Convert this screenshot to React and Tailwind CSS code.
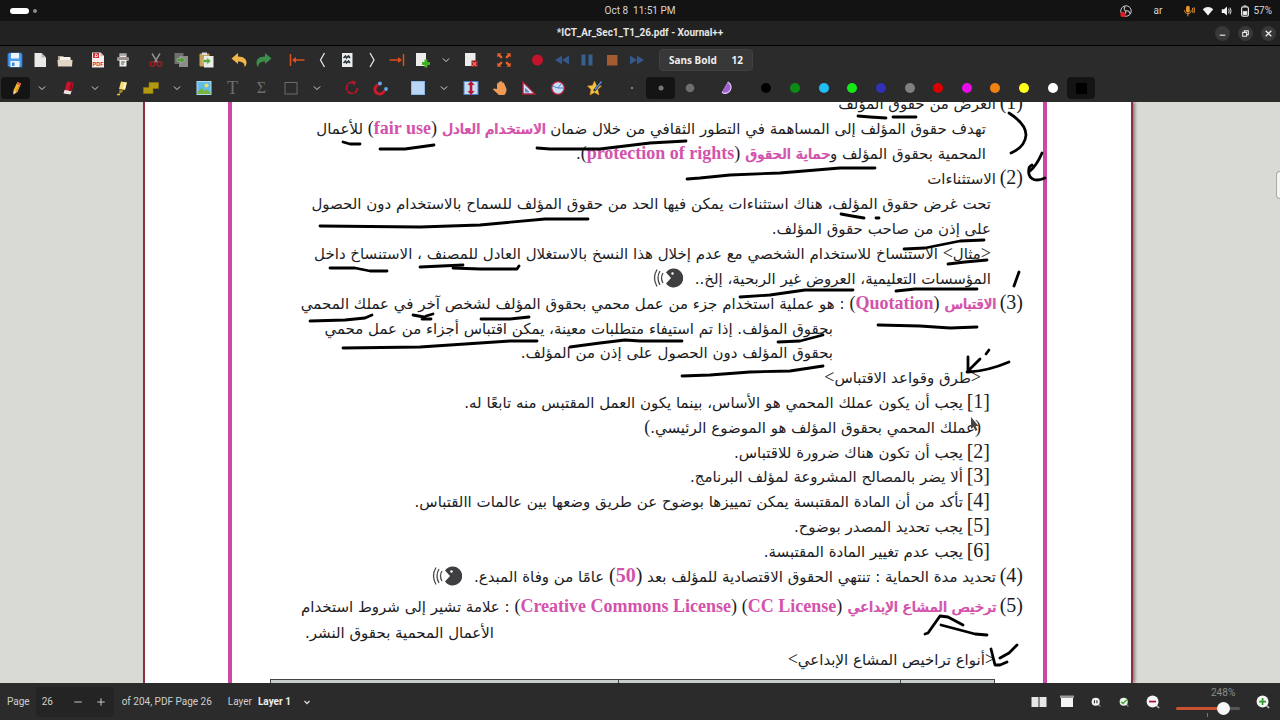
import React, { useState } from 'react';

const Svg = ({ size = 'w-4 h-4', children }) => (
    <svg viewBox="0 0 16 16" className={`${size} shrink-0`} fill="none">{children}</svg>
);

const Chevron = () => (
    <Svg size="w-[10px] h-[10px]">
        <path d="M3 5.5l5 5 5-5" stroke="#d8d8d8" strokeWidth="1.6" />
    </Svg>
);

const ICONS = {
    save: (
        <Svg>
            <path d="M1 2.500Q1 1 2.500 1H13.500Q15 1 15 2.500V15H2.500L1 13.500z" fill="#4a9df0" stroke="#2c6fbf" />
            <rect x="4" y="1" width="8" height="5.500" fill="#eef4fb" />
            <rect x="3.500" y="9" width="9" height="6" fill="#eef4fb" />
            <rect x="5" y="10.500" width="2.500" height="3.500" fill="#3a86da" />
        </Svg>
    ),
    newDoc: (
        <Svg>
            <path d="M2.500 1h7l4.500 4.500V15H2.500z" fill="#e9e9e7" />
            <path d="M9.500 1v4.500H14z" fill="#b9b9b6" />
        </Svg>
    ),
    open: (
        <Svg>
            <path d="M1 4h5l1.500 1.500H14V9H1z" fill="#b9a994" />
            <path d="M3 5h10v4H3z" fill="#f3f1ee" />
            <path d="M.5 8h15l-.5 6.500H1z" fill="#e2d5c4" />
        </Svg>
    ),
    pdf: (
        <Svg>
            <path d="M2 .5h8.500L14 4v11.500H2z" fill="#f5eeee" />
            <path d="M3 1h6v5H3z" fill="#d8282c" />
            <path d="M5 5l1-3.500L8 4z" stroke="#fff" strokeWidth=".8" />
            <path d="M10.500.5V4H14z" fill="#c9b8b8" />
            <text x="8" y="13.500" fontSize="5.500" fontWeight="bold" textAnchor="middle" fill="#d8282c" fontFamily="Liberation Sans, sans-serif">PDF</text>
        </Svg>
    ),
    print: (
        <Svg>
            <path d="M4.500 1.500h7V5h-7z" fill="#e8e6e4" />
            <path d="M5 3h6" stroke="#777" />
            <rect x="2" y="5" width="12" height="4" rx="1" fill="#9d918d" />
            <path d="M4.500 8h7v6.500h-7z" fill="#efefed" />
            <path d="M6 10h4M6 12h3" stroke="#555" />
        </Svg>
    ),
    cut: (
        <Svg>
            <path d="M4 1.500l5.500 9M12 1.500l-5.500 9" stroke="#8e8e8e" strokeWidth="1.500" />
            <circle cx="4.500" cy="12" r="2.300" stroke="#9b2025" strokeWidth="1.500" />
            <circle cx="11.500" cy="12" r="2.300" stroke="#9b2025" strokeWidth="1.500" />
        </Svg>
    ),
    copy: (
        <Svg>
            <rect x="1.500" y="1" width="9" height="11" fill="#6f6f6d" />
            <rect x="6" y="4" width="9" height="11" fill="#8b8b88" />
            <path d="M4 6.500h4V4.500l4 3.500-4 3.500V9.500H4z" fill="#4d9a35" stroke="#a5b89e" strokeWidth=".6" />
        </Svg>
    ),
    paste: (
        <Svg>
            <rect x="1.500" y="1.500" width="10" height="13" rx="1" fill="#c6a15a" />
            <rect x="4" y=".5" width="5" height="2.500" fill="#ddd" />
            <rect x="6" y="4" width="9.500" height="11.500" fill="#ecece9" />
            <path d="M5 7.500h4V5.500l4 3.500-4 3.500v-2H5z" fill="#5aab3b" stroke="#d4e8cc" strokeWidth=".6" />
        </Svg>
    ),
    undo: (
        <Svg>
            <path d="M.5 6.500L7 1v3.500c6 0 8.500 3 8.500 6 0 2-.8 3.500-2 4.500.3-3-1-5.500-6.500-5.500V12z" fill="#f2b54a" />
        </Svg>
    ),
    redo: (
        <Svg>
            <path d="M15.500 6.500L9 1v3.500c-6 0-8.500 3-8.500 6 0 2 .8 3.500 2 4.500-.3-3 1-5.500 6.500-5.500V12z" fill="#3c8f4a" />
        </Svg>
    ),
    first: (
        <Svg>
            <path d="M1.500 2v12M4 8h11.500" stroke="#dd4f1e" strokeWidth="1.500" />
            <path d="M3 8l4-3v6z" fill="#dd4f1e" />
        </Svg>
    ),
    prev: <Svg><path d="M10.500 1L6.500 8l4 7" stroke="#e4e4e4" strokeWidth="1.300" /></Svg>,
    goto: (
        <Svg>
            <rect x="3" y="1" width="10.500" height="14" fill="#eceeee" />
            <path d="M4.500 6l2-2 1 2 2-2 1.500 2M4.500 11l2-2 1 2 2-2 1.500 2" stroke="#263238" strokeWidth="1.600" />
        </Svg>
    ),
    next: <Svg><path d="M6 1L10 8l-4 7" stroke="#e4e4e4" strokeWidth="1.300" /></Svg>,
    last: (
        <Svg>
            <path d="M14.500 2v12M.5 8H12" stroke="#dd4f1e" strokeWidth="1.500" />
            <path d="M13 8L9 5v6z" fill="#dd4f1e" />
        </Svg>
    ),
    addPage: (
        <Svg>
            <path d="M2 1h10v13H2z" fill="#ecece9" />
            <path d="M12 7.500v8M8 11.500h8" stroke="#3fb31f" strokeWidth="3" />
        </Svg>
    ),
    delPage: (
        <Svg>
            <path d="M2 1h10.500v13H2z" fill="#ecece9" />
            <rect x="8.500" y="8.500" width="6.500" height="6.500" fill="#8e1a22" />
            <path d="M9.500 10l4 4M13.500 10l-4 4" stroke="#ff6a6a" strokeWidth="1.400" />
        </Svg>
    ),
    full: (
        <Svg>
            <path d="M1 6V1h5L4.500 2.500 7 5 5 7 2.500 4.500zM15 6V1h-5l1.500 1.500L9 5l2 2 2.500-2.500zM1 10v5h5l-1.500-1.500L7 11 5 9l-2.500 2.500zM15 10v5h-5l1.500-1.500L9 11l2-2 2.500 2.500z" fill="#e8602c" stroke="#2b2b2b" strokeWidth=".6" />
        </Svg>
    ),
    record: <Svg><circle cx="8.500" cy="8" r="5.500" fill="#c4142c" /></Svg>,
    rewind: <Svg><path d="M8 3.500v9L1 8zM15 3.500v9L8 8z" fill="#35578a" /></Svg>,
    pause: <Svg><path d="M2.500 2.500h4v11h-4zM9.500 2.500h4v11h-4z" fill="#35608f" /></Svg>,
    stop: <Svg><rect x="3" y="3" width="10.500" height="10.500" fill="#a35c30" /></Svg>,
    forward: <Svg><path d="M1 3.500v9L8 8zM8 3.500v9L15 8z" fill="#35578a" /></Svg>,
    pencil: (
        <Svg>
            <path d="M9.500 2l3.500 1.500-3.500 8.500-4 2.500.3-5z" fill="#f3b62e" />
            <path d="M9.500 2l3.500 1.500-.8 2L8.700 4z" fill="#e2574c" />
            <path d="M5.700 10.500l2.500 1.600-2.800 2.400z" fill="#f4dcae" />
            <path d="M11.500 5L8 12" stroke="#d98516" />
        </Svg>
    ),
    eraser: (
        <Svg>
            <path d="M6 1.500l7 1-2.500 9.500-7-1z" fill="#c9142c" />
            <path d="M3.500 10l7 1-1 3.500-7-1z" fill="#ece3e3" />
            <path d="M11 2.500L9 11" stroke="#8e0b1e" strokeWidth="2" />
        </Svg>
    ),
    marker: (
        <Svg>
            <path d="M7 1.500l6 1-2 7.500-6-1z" fill="#f6dc78" />
            <path d="M11.500 2.500L10 9" stroke="#fff3c4" strokeWidth="2" />
            <path d="M5.500 9.500l4 1-2 2.500-2.500.5z" fill="#a88222" />
            <path d="M3 14.500h3" stroke="#e7c53c" strokeWidth="1.500" />
        </Svg>
    ),
    select: <Svg><path d="M6 2.500h9.500v6H10v5H.5v-6H6z" fill="#b3990f" stroke="#8d780c" strokeWidth=".6" /></Svg>,
    image: (
        <Svg>
            <rect x="1" y="1.500" width="14" height="13" fill="#63bde8" stroke="#a9dcf4" />
            <circle cx="10.500" cy="5.500" r="2" fill="#f7dc4f" />
            <path d="M1.500 12l4-4 3 3 2-1.500 4 3V14h-13z" fill="#79b43c" />
        </Svg>
    ),
    shape: <Svg><rect x="2" y="2.500" width="12" height="11.500" stroke="#6d6d6d" /></Svg>,
    rotate: (
        <Svg>
            <path d="M10 2.800A5.500 5.500 0 1 0 13.500 8" stroke="#b5182a" strokeWidth="1.800" strokeDasharray="6 1" />
            <path d="M8 .5l4.500 1.500L9.500 6z" fill="#b5182a" />
        </Svg>
    ),
    magnet: (
        <Svg>
            <path d="M5.500 4.500C1.500 6 .5 11.500 4.500 13.500c3.500 1.500 6-.5 7-3" stroke="#cf1a2c" strokeWidth="2.800" />
            <circle cx="7" cy="3.500" r="1.900" fill="#66a9ef" />
            <circle cx="13" cy="9" r="1.900" fill="#66a9ef" />
        </Svg>
    ),
    rectSelect: <Svg><rect x="1.500" y="1.500" width="13" height="13" fill="#b9d7f4" stroke="#8db8e4" /></Svg>,
    vertical: (
        <Svg>
            <rect x="1" y="1.500" width="14" height="13" fill="#c4dbf5" stroke="#4f84c4" />
            <path d="M8 1l3.500 4H9.300v6h2.200L8 15l-3.500-4h2.200V5H4.500z" fill="#b7142e" />
        </Svg>
    ),
    hand: (
        <Svg>
            <path d="M5 9V3.500q.8-1.200 1.600 0V2q.9-1.200 1.800 0v-.5q.9-1.200 1.800 0V3q.9-1 1.800 0L14.500 9q.5 3-2 6H7L1 9.500q.5-1.500 2-.8z" fill="#f19a54" />
        </Svg>
    ),
    triangle: (
        <Svg>
            <path d="M2 2V14H14z" fill="#cfe0f4" stroke="#b3203c" strokeWidth="1.300" />
            <path d="M4.500 8.500V12H8z" fill="#7f8fa8" stroke="#5b8ed1" />
        </Svg>
    ),
    compass: (
        <Svg>
            <circle cx="8" cy="8" r="6.300" fill="#c8def6" stroke="#b3203c" strokeWidth="1.300" />
            <path d="M2.500 6L8 8h6M8 8l3-4" stroke="#4a86c8" />
        </Svg>
    ),
    star: (
        <Svg>
            <path d="M7.500 1l2 4.500 5 .5-3.800 3.500 1.300 5.500-4.500-2.500L3 15l1-5.500L.5 6l5-.5z" fill="#f5c542" stroke="#d08a1c" strokeWidth=".6" />
            <path d="M14.500 1.500L7 11" stroke="#24364f" strokeWidth="2.600" />
            <path d="M14.500 1.500L8 9.500" stroke="#5d8fd6" strokeWidth="1.200" />
        </Svg>
    ),
    dotS: <Svg><circle cx="8" cy="8" r="1.300" fill="#777" /></Svg>,
    dotM: <Svg><circle cx="8" cy="8" r="2.500" fill="#777" /></Svg>,
    dotL: <Svg><circle cx="8" cy="8" r="4.300" fill="#6e6e6e" /></Svg>,
    fill: (
        <Svg>
            <path d="M9 2A6 6 0 1 1 3 12.500z" fill="#a25fd6" />
            <path d="M9 2A6 6 0 1 1 3 12.500" stroke="#e3c8f5" strokeWidth="1.200" />
            <path d="M9 2L3 12.500" stroke="#c79be6" strokeDasharray="1.500 1" />
        </Svg>
    ),
};

const fileTools = [
    ['save', 'newDoc', 'open'],
    ['pdf', 'print'],
    ['cut', 'copy', 'paste'],
    ['undo', 'redo'],
    ['first', 'prev', 'goto', 'next', 'last', 'addPage', 'chevron', 'delPage'],
    ['full'],
    ['record', 'rewind', 'pause', 'stop', 'forward'],
];

const penTools = [
    ['pencil', 'chevron', 'eraser', 'chevron', 'marker', 'select', 'chevron', 'image', 'text', 'latex', 'shape', 'chevron'],
    ['rotate', 'magnet'],
    ['rectSelect', 'chevron', 'vertical', 'hand', 'triangle', 'compass'],
    ['star'],
    ['dotS', 'dotM', 'dotL'],
    ['fill'],
];

const colors = ['#000000', '#0e8a16', '#22bdf2', '#17e817', '#3330b8', '#808080', '#dc0000', '#e80ee8', '#f08316', '#ffff1a', '#ffffff'];

function ToolButton({ name, wide, active, onClick }) {
    const isChevron = name === 'chevron';
    let width = wide ? 'w-[29px]' : 'w-[25px]';
    if (isChevron) width = 'w-[24px]';
    return (
        <button
            aria-label={name}
            onClick={onClick}
            className={`${width} h-[22px] flex items-center justify-center rounded ${active ? 'bg-[#141414]' : ''}`}
        >
            {isChevron && <Chevron />}
            {name === 'text' && <span className="font-['Liberation_Serif',serif] text-[18px] leading-none text-[#6d6d6d]">T</span>}
            {name === 'latex' && <span className="font-['Liberation_Serif',serif] text-[16px] leading-none text-[#6d6d6d]">Σ</span>}
            {ICONS[name]}
        </button>
    );
}

// Latin text inside the Arabic paragraphs
const En = ({ size = 'text-[18px]', children }) => (
    <bdi className={`font-['Liberation_Serif',serif] ${size} leading-none`}>{children}</bdi>
);
const Pink = ({ children }) => <b className="text-[#d352ab]">{children}</b>;
// the bold Arabic face is far too wide, so thicken the regular one
const PinkAr = ({ children }) => (
    <strong className="font-normal text-[#d352ab] [text-shadow:1px_0_#d352ab]">{children}</strong>
);
const Mark = ({ children }) => <span className="font-['Liberation_Serif',serif] text-[18px] leading-none">{children}</span>;
const Num = ({ children }) => <span className="inline-block w-[27px] leading-none"><En size="text-[20px]">{children}</En></span>;

const Line = ({ className = 'pr-[20px]', children }) => (
    <p className={`${className} h-[25px] leading-[25px] whitespace-nowrap`}>{children}</p>
);

const Speaking = () => (
    <svg viewBox="0 0 30 20" className="inline-block w-[30px] h-[20px] mr-3 mb-1 align-middle" fill="none">
        <path d="M13 4.500A9.500 9.500 0 1 1 13 15.500L18 10z" fill="#3f3f42" />
        <circle cx="19.500" cy="5.500" r="1.200" fill="#fff" />
        <path d="M10 5Q7 10 10 15M7 3Q3 10 7 17M4 1.500Q-1 10 4 18.500" stroke="#4a4a4d" strokeWidth="1.300" />
    </svg>
);

const strokes = [
    'M858 116L870 117L886 118',
    'M893 117L916 117',
    'M1009 113Q1026 124 1026 135Q1025 147 1011 153',
    'M1042 153Q1037 165 1030 171Q1027 168 1032 165M1029 168C1027 178 1034 183 1045 178',
    'M687 179L700 178L730 175L780 173L840 168L875 168',
    'M841 214L852 216L864 218',
    'M876 218L879 218',
    'M904 249L925 248L960 241L984 240',
    'M948 264L965 262L987 260',
    'M1014 286L1019 272',
    'M896 291L915 289L977 289',
    'M740 297L770 295L805 290L853 290',
    'M343 142L350 144L360 144',
    'M380 149L405 149L434 145',
    'M537 148L550 149L600 149L650 143L686 141',
    'M320 226L420 227L480 225L545 219L588 219',
    'M330 268L355 268L370 271L387 271',
    'M420 267L463 265',
    'M453 268L480 269L517 269L519 266',
    'M310 321L345 320L365 318L372 315',
    'M413 315L424 317L422 319L431 319M426 316L433 314',
    'M481 319L510 319L529 317',
    'M343 348L420 347L480 343L510 341L537 341',
    'M570 347L600 343L625 340L640 341L682 341',
    'M682 376L710 375L750 372L790 371L823 366',
    'M778 342L800 341L823 335',
    'M878 325L920 326L950 328L977 327',
    'M968 357L968 372Q988 371 1009 362M967 372L980 359M986 354L989 350',
    'M925 634L928 633L940 616L948 617L963 625',
    'M941 625L960 630L975 634L987 635',
    'M991 649L995 665L1000 665L1007 662M1000 658L1009 653L1017 645',
];

function TopBar() {
    return (
        <header className="h-[21px] shrink-0 bg-[#131313] text-[#d6d6d6] grid grid-cols-3 items-center px-[10px]">
            <div className="flex items-center gap-1">
                <span className="w-[19px] h-[6px] rounded-full bg-white"></span>
                <span className="w-1 h-1 rounded-full bg-[#8a8a8a]"></span>
            </div>
            <time className="text-center whitespace-pre">Oct 8  11:51 PM</time>
            <div className="flex items-center justify-end -mr-[2px]">
                <Svg size="w-3 h-3">
                    <circle cx="8" cy="8" r="7" stroke="#c9c9c9" strokeWidth="1.300" />
                    <path d="M8 8c-3-1-3-4-1-6M8 8c3-1 5 1 5.500 4M8 8c0 3-2 5-5 4" stroke="#c9c9c9" strokeWidth="1.500" />
                    <circle cx="4" cy="12.500" r="3.500" fill="#e01b24" />
                </Svg>
                <span className="ml-[22px] mr-[21px]">ar</span>
                <Svg size="w-3 h-3">
                    <rect x="4" y="1" width="5" height="9" rx="2.500" fill="#e8962e" />
                    <path d="M2 7c0 6 9 6 9 0M6.500 11.500V15M12.500 4q1.500 3 0 6M14.500 3q2 4 0 8" stroke="#e8962e" strokeWidth="1.300" />
                </Svg>
                <span className="w-[7px]"></span>
                <Svg size="w-3 h-3"><path d="M1 5.500Q8-.5 15 5.500L8 14z" fill="#f2f2f2" /></Svg>
                <span className="w-[7px]"></span>
                <Svg size="w-3 h-3">
                    <path d="M1 5.500h3L8 2v12l-4-3.500H1z" fill="#f2f2f2" />
                    <path d="M10 5q2 3 0 6M12 3.500q3 4.500 0 9" stroke="#f2f2f2" strokeWidth="1.200" />
                </Svg>
                <span className="w-[6px]"></span>
                <Svg size="w-3 h-3">
                    <rect x="3.500" y="2.500" width="9" height="12.500" rx="2" stroke="#f2f2f2" strokeWidth="1.500" />
                    <path d="M6 1h4M5.500 8.500h5v4.500h-5z" stroke="#f2f2f2" fill="#f2f2f2" />
                </Svg>
                <span className="ml-[2px]">57%</span>
            </div>
        </header>
    );
}

function TitleBar() {
    const btn = 'w-[15px] h-[15px] rounded-full bg-[#383838] flex items-center justify-center';
    return (
        <div className="h-[25px] shrink-0 bg-[#222222] border-b border-black grid grid-cols-[1fr_auto_1fr] items-center px-1">
            <span></span>
            <h1 className="font-bold text-[#e6e6e6]">*ICT_Ar_Sec1_T1_26.pdf - Xournal++</h1>
            <div className="flex justify-end gap-2">
                <button aria-label="Minimize" className={btn}>
                    <Svg size="w-[9px] h-[9px]"><path d="M3 11h10" stroke="#eee" strokeWidth="2" /></Svg>
                </button>
                <button aria-label="Restore" className={btn}>
                    <Svg size="w-[9px] h-[9px]"><path d="M3 6h7v7H3zM6 6V3h7v7h-3" stroke="#eee" strokeWidth="1.800" /></Svg>
                </button>
                <button aria-label="Close" className={btn}>
                    <Svg size="w-[9px] h-[9px]"><path d="M3 3l10 10M13 3L3 13" stroke="#eee" strokeWidth="2.200" /></Svg>
                </button>
            </div>
        </div>
    );
}

function Toolbars() {
    const [tool, setTool] = useState('pencil');
    return (
        <div className="shrink-0 bg-[#2b2b2b] h-14 flex flex-col">
            <div className="h-7 flex items-center gap-2 pl-[2px]">
                {fileTools.map((group, i) => (
                    <div key={i} className="flex items-center">
                        {group.map(name => <ToolButton key={name} name={name} />)}
                    </div>
                ))}
                <button className="h-[22px] w-[94px] ml-[2px] rounded bg-[#383838] border border-[#404040] text-[#eeeeee] font-['Noto_Sans',sans-serif] font-bold flex items-center justify-between px-[9px]">
                    <span>Sans Bold</span>
                    <span>12</span>
                </button>
            </div>
            <div className="h-7 flex items-center gap-2 pl-[1px]">
                {penTools.map((group, i) => (
                    <div key={i} className="flex items-center">
                        {group.map((name, j) => (
                            <ToolButton
                                key={j}
                                name={name}
                                wide
                                active={name === tool || name === 'dotM'}
                                onClick={() => name !== 'chevron' && setTool(name)}
                            />
                        ))}
                    </div>
                ))}
                <div className="flex items-center ml-[3px]">
                    <div className="flex w-[315px]">
                        {colors.map(color => (
                            <button key={color} aria-label={color} className="flex-1 h-[22px] flex items-center justify-center">
                                <span className="w-[10px] h-[10px] rounded-full" style={{ background: color }}></span>
                            </button>
                        ))}
                    </div>
                    <button aria-label="Custom color" className="w-[28px] h-[22px] rounded bg-[#141414] flex items-center justify-center">
                        <span className="w-[11px] h-[11px] bg-black"></span>
                    </button>
                </div>
            </div>
        </div>
    );
}

function PdfPage() {
    return (
        <article
            dir="rtl"
            lang="ar"
            className="relative mx-auto w-[990px] h-full overflow-hidden bg-white border-x-2 border-[#8f3040] pl-[83px] pr-[84px] shadow-[2px_0_3px_#8a7a78]"
        >
            <div className="h-full border-x-[4px] border-[#cb48a3] overflow-hidden font-['DejaVu_Sans',sans-serif] text-[15px] text-[#1d1d1f]">
                <div className="-mt-[10px]">
                    <Line><Num>(1)</Num>الغرض من حقوق المؤلف</Line>
                    <Line className="pr-[57px]">تهدف حقوق المؤلف إلى المساهمة في التطور الثقافي من خلال ضمان <PinkAr>الاستخدام العادل</PinkAr> <En>(<Pink>fair use</Pink>)</En> للأعمال</Line>
                    <Line className="pr-[57px]">المحمية بحقوق المؤلف و<PinkAr>حماية الحقوق</PinkAr> <En>(<Pink>protection of rights</Pink>)</En>.</Line>
                    <Line><Num>(2)</Num>الاستثناءات</Line>
                    <Line className="pr-[52px]">تحت غرض حقوق المؤلف، هناك استثناءات يمكن فيها الحد من حقوق المؤلف للسماح بالاستخدام دون الحصول</Line>
                    <Line className="pr-[52px]">على إذن من صاحب حقوق المؤلف.</Line>
                    <Line className="pr-[52px]"><Mark>&lt;</Mark>مثال<Mark>&gt;</Mark> الاستنساخ للاستخدام الشخصي مع عدم إخلال هذا النسخ بالاستغلال العادل للمصنف ، الاستنساخ داخل</Line>
                    <Line className="pr-[52px]">المؤسسات التعليمية، العروض غير الربحية، إلخ..<Speaking /></Line>
                    <Line><Num>(3)</Num><PinkAr>الاقتباس</PinkAr> <En>(<Pink>Quotation</Pink>)</En> : هو عملية استخدام جزء من عمل محمي بحقوق المؤلف لشخص آخر في عملك المحمي</Line>
                    <Line className="pr-[210px]">بحقوق المؤلف. إذا تم استيفاء متطلبات معينة، يمكن اقتباس أجزاء من عمل محمي</Line>
                    <Line className="pr-[210px] -mt-px">بحقوق المؤلف دون الحصول على إذن من المؤلف.</Line>
                    <Line className="pr-[62px]"><Mark>&lt;</Mark>طرق وقواعد الاقتباس<Mark>&gt;</Mark></Line>
                    <Line className="pr-[53px]"><Num>[1]</Num>يجب أن يكون عملك المحمي هو الأساس، بينما يكون العمل المقتبس منه تابعًا له.</Line>
                    <Line className="pr-[62px]"><Mark>(</Mark>عملك المحمي بحقوق المؤلف هو الموضوع الرئيسي.<Mark>)</Mark></Line>
                    <Line className="pr-[53px]"><Num>[2]</Num>يجب أن تكون هناك ضرورة للاقتباس.</Line>
                    <Line className="pr-[53px] -mt-px"><Num>[3]</Num>ألا يضر بالمصالح المشروعة لمؤلف البرنامج.</Line>
                    <Line className="pr-[53px]"><Num>[4]</Num>تأكد من أن المادة المقتبسة يمكن تمييزها بوضوح عن طريق وضعها بين عالمات االقتباس.</Line>
                    <Line className="pr-[53px]"><Num>[5]</Num>يجب تحديد المصدر بوضوح.</Line>
                    <Line className="pr-[53px]"><Num>[6]</Num>يجب عدم تغيير المادة المقتبسة.</Line>
                    <Line><Num>(4)</Num>تحديد مدة الحماية : تنتهي الحقوق الاقتصادية للمؤلف بعد <En size="text-[20px]">(<Pink>50</Pink>)</En> عامًا من وفاة المبدع.<Speaking /></Line>
                    <Line className="pr-[20px] mt-[5px]"><Num>(5)</Num><PinkAr>ترخيص المشاع الإبداعي</PinkAr> <En>(<Pink>CC License</Pink>)</En> <En>(<Pink>Creative Commons License</Pink>)</En> : علامة تشير إلى شروط استخدام</Line>
                    <Line className="pr-[549px] mt-px">الأعمال المحمية بحقوق النشر.</Line>
                    <Line className="pr-[48px] mt-[2px]"><Mark>&lt;</Mark>أنواع تراخيص المشاع الإبداعي<Mark>&gt;</Mark></Line>
                    <table className="mt-[6px] mr-[48px] w-[725px] table-fixed border-collapse bg-[#c9cdce]">
                        <tbody>
                            <tr className="h-8">
                                <td className="w-[94px] border border-[#444]"></td>
                                <td className="w-[282px] border border-[#444]"></td>
                                <td className="border border-[#444]"></td>
                            </tr>
                        </tbody>
                    </table>
                </div>
            </div>

            {/* pen annotations */}
            <svg viewBox="143 102 990 581" className="absolute top-0 -left-[2px] w-[990px] h-[581px]" fill="none">
                {strokes.map(d => (
                    <path key={d} d={d} stroke="#000" strokeWidth="2.800" strokeLinecap="round" strokeLinejoin="round" />
                ))}
                <path d="M971 417v12l2.500-2 2 4 2-1-2-4h3z" fill="#444" />
            </svg>
        </article>
    );
}

function StatusBar() {
    const [zoom, setZoom] = useState(248);
    return (
        <footer className="h-[37px] shrink-0 bg-[#2b2b2b] text-[#cfcfcf] flex items-center pl-[7px] pr-[10px]">
            <label htmlFor="page">Page</label>
            <div className="ml-[6px] h-[30px] w-[78px] flex items-center rounded bg-[#242424]">
                <input id="page" defaultValue="26" className="w-[30px] pl-[6px] bg-transparent outline-none" />
                <button aria-label="Previous page" className="w-[25px] flex justify-center">
                    <Svg size="w-[10px] h-[10px]"><path d="M2 8h12" stroke="#cfcfcf" strokeWidth="1.500" /></Svg>
                </button>
                <button aria-label="Next page" className="w-[21px] flex justify-center">
                    <Svg size="w-[10px] h-[10px]"><path d="M2 8h12M8 2v12" stroke="#cfcfcf" strokeWidth="1.500" /></Svg>
                </button>
            </div>
            <span className="ml-2">of 204, PDF Page 26</span>
            <span className="ml-4">Layer</span>
            <button className="ml-[6px] flex items-center gap-3 font-bold text-[#eeeeee]">
                Layer 1
                <Svg size="w-2 h-2"><path d="M3 6l5 5 5-5" stroke="#d8d8d8" strokeWidth="2.500" /></Svg>
            </button>

            <div className="ml-auto flex items-center">
                <button aria-label="Paired pages" className="w-[29px] flex justify-center">
                    <Svg><path d="M.5 3h7v10h-7zM8.500 3h7v10h-7z" fill="#e6e6e4" /></Svg>
                </button>
                <button aria-label="Presentation" className="w-[28px] flex justify-center">
                    <Svg><path d="M2 4h12v9H2z" fill="#f4f4f4" /><path d="M1 1.500h14V4H1z" fill="#9b9b99" /></Svg>
                </button>
                <button aria-label="Zoom 100%" className="w-[29px] flex justify-center">
                    <Svg size="w-[10px] h-[10px]">
                        <path d="M11 11l4 4" stroke="#999" strokeWidth="2" /><circle cx="7.500" cy="7.500" r="6.500" fill="#f2f2f2" />
                        <path d="M5.500 5v5M9.500 5v5" stroke="#333" strokeWidth="1.800" />
                    </Svg>
                </button>
                <button aria-label="Zoom fit" className="w-[28px] flex justify-center">
                    <Svg size="w-[10px] h-[10px]">
                        <path d="M11 11l4 4" stroke="#999" strokeWidth="2" /><circle cx="7.500" cy="7.500" r="6.500" fill="#e9f5e6" />
                        <path d="M3.500 7.500l3 3 6-6" stroke="#3fa52a" strokeWidth="2.200" />
                    </Svg>
                </button>
                <button aria-label="Zoom out" className="w-[30px] flex justify-center">
                    <Svg size="w-[14px] h-[14px]">
                        <path d="M11 11l4 4" stroke="#aaa" strokeWidth="2" /><circle cx="7.500" cy="7.500" r="6.800" fill="#f6f6f6" />
                        <path d="M3.500 7.500h8" stroke="#a50f3c" strokeWidth="2" />
                    </Svg>
                </button>
                <div className="ml-2 w-[64px] h-[37px] flex flex-col">
                    <output htmlFor="zoom" className="h-[19px] flex items-center pl-[35px] text-[#8b8b8b]">{zoom}%</output>
                    <input
                        id="zoom"
                        type="range"
                        min="30"
                        max="300"
                        aria-label="Zoom"
                        value={zoom}
                        onChange={e => setZoom(Number(e.target.value))}
                        className="appearance-none w-full h-[3px] mt-[5px] rounded bg-linear-to-r from-[#c9532f] from-75% to-[#555] to-75% [&::-webkit-slider-thumb]:appearance-none [&::-webkit-slider-thumb]:w-[13px] [&::-webkit-slider-thumb]:h-[13px] [&::-webkit-slider-thumb]:rounded-full [&::-webkit-slider-thumb]:bg-[#f7f7f7]"
                    />
                    <span className="ml-[31px] mt-[3px] w-px h-1 bg-[#777]"></span>
                </div>
                <button aria-label="Zoom in" className="ml-4 w-[14px] flex justify-center">
                    <Svg size="w-[14px] h-[14px]">
                        <path d="M11 11l4 4" stroke="#aaa" strokeWidth="2" /><circle cx="7.500" cy="7.500" r="6.800" fill="#f6f6f6" />
                        <path d="M3.500 7.500h8M7.500 3.500v8" stroke="#2b9a2b" strokeWidth="2" />
                    </Svg>
                </button>
            </div>
        </footer>
    );
}

export default function App() {
    return (
        <div className="h-screen flex flex-col overflow-hidden font-['Roboto',sans-serif] text-[10px] leading-none">
            <TopBar />
            <TitleBar />
            <Toolbars />
            <main className="relative flex-1 min-h-0 pr-1 bg-[#dadad5] overflow-hidden">
                <PdfPage />
                <span className="absolute right-0 top-[69px] w-[4px] h-[28px] rounded-l border border-r-0 border-[#a9a9a5] bg-[#f4f4f2]"></span>
            </main>
            <StatusBar />
        </div>
    );
}
